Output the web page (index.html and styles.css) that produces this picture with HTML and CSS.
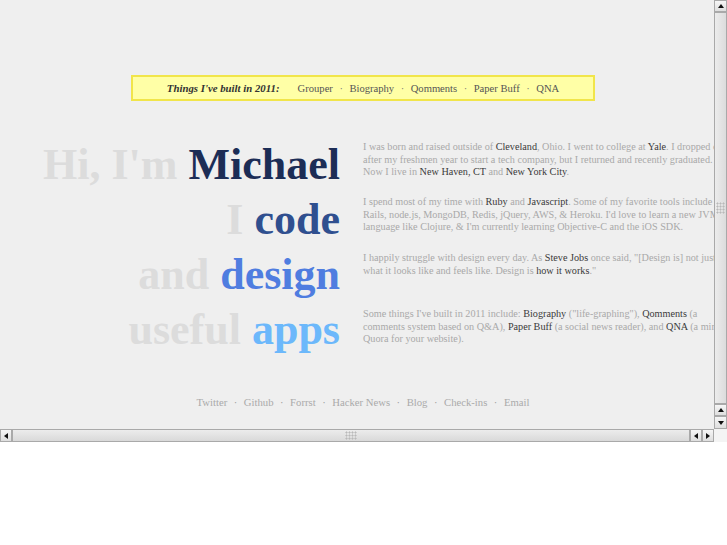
FILE: index.html
```html
<!DOCTYPE html>
<html>
<head>
    <link rel="stylesheet" href="styles.css">
</head>
<body>
    <div class="frame">
        <div class="viewport">
            <div class="page">
                <div class="built">
                    <span class="built-label">Things I've built in 2011:</span>
                    <a>Grouper</a><span class="dot">&middot;</span>
                    <a>Biography</a><span class="dot">&middot;</span>
                    <a>Qomments</a><span class="dot">&middot;</span>
                    <a>Paper Buff</a><span class="dot">&middot;</span>
                    <a>QNA</a>
                </div>

                <div class="intro">
                    <div class="line">Hi, I'm <span class="c1">Michael</span></div>
                    <p class="para">I was born and raised outside of <a>Cleveland</a>, Ohio. I went to college at <a>Yale</a>. I dropped out<br>
                    after my freshmen year to start a tech company, but I returned and recently graduated.<br>
                    Now I live in <a>New Haven, CT</a> and <a>New York City</a>.</p>

                    <div class="line">I <span class="c2">code</span></div>
                    <p class="para">I spend most of my time with <a>Ruby</a> and <a>Javascript</a>. Some of my favorite tools include<br>
                    Rails, node.js, MongoDB, Redis, jQuery, AWS, &amp; Heroku. I'd love to learn a new JVM<br>
                    language like Clojure, &amp; I'm currently learning Objective-C and the iOS SDK.</p>

                    <div class="line">and <span class="c3">design</span></div>
                    <p class="para p3">I happily struggle with design every day. As <a>Steve Jobs</a> once said, "[Design is] not just<br>
                    what it looks like and feels like. Design is <a>how it works</a>."</p>

                    <div class="line">useful <span class="c4">apps</span></div>
                    <p class="para p4">Some things I've built in 2011 include: <a>Biography</a> ("life-graphing"), <a>Qomments</a> (a<br>
                    comments system based on Q&amp;A), <a>Paper Buff</a> (a social news reader), and <a>QNA</a> (a mini<br>
                    Quora for your website).</p>
                </div>

                <div class="footer">
                    <a>Twitter</a><span class="dot">&middot;</span>
                    <a>Github</a><span class="dot">&middot;</span>
                    <a>Forrst</a><span class="dot">&middot;</span>
                    <a>Hacker News</a><span class="dot">&middot;</span>
                    <a>Blog</a><span class="dot">&middot;</span>
                    <a>Check-ins</a><span class="dot">&middot;</span>
                    <a>Email</a>
                </div>
            </div>
        </div>

        <div class="vscroll">
            <div class="btn up"></div>
            <div class="thumb"><div class="grip"></div></div>
            <div class="btn up"></div>
            <div class="btn down"></div>
        </div>
        <div class="hscroll">
            <div class="btn left"></div>
            <div class="thumb"><div class="grip"></div></div>
            <div class="btn left"></div>
            <div class="btn right"></div>
        </div>
        <div class="corner"></div>
    </div>
</body>
</html>
```

FILE: styles.css
```css
body{
    margin: 0;
    background-color: #fff;
    font-family: "Liberation Serif", "Times New Roman", serif;
}

/* frame with its scrollbars */
.frame{
    display: grid;
    grid-template-columns: 714px 13px;
    grid-template-rows: 429px 13px;
    width: 727px;
}
.viewport{
    overflow: hidden;
    background-color: #efefef;
}
.page{
    width: 726px;
    padding-top: 75px;
}

/* yellow bar */
.built{
    box-sizing: border-box;
    width: 464px;
    height: 26px;
    margin: 0 auto;
    display: flex;
    justify-content: center;
    align-items: center;
    background-color: #ffffa6;
    border: 2px solid #f1e54a;
    font-size: 10.6px;
    color: #555;
}
.built-label{
    font-size: 10.8px;
    font-weight: bold;
    font-style: italic;
    color: #333;
    margin-right: 18px;
}
.dot{
    margin: 0 6.5px;
    color: #999;
}
.built .dot{
    color: #777;
}

/* heading + paragraphs */
.intro{
    display: grid;
    grid-template-columns: 340px 380px;
    grid-auto-rows: 55px;
    column-gap: 23px;
    margin-top: 36px;
}
.line{
    text-align: right;
    white-space: nowrap;
    font-size: 44px;
    line-height: 55px;
    font-weight: bold;
    color: #dcdcdc;
}
.c1{ color: #1c2d56; }
.c2{ color: #2f4f8f; }
.c3{ color: #4f7de0; }
.c4{ color: #6cb8fb; }

.para{
    margin: 0;
    padding-top: 4px;
    white-space: nowrap;
    font-size: 10.2px;
    line-height: 12.5px;
    color: #a9a9a9;
}
.para.p3{
    padding-top: 5px;
}
.para.p4{
    padding-top: 6px;
}
.para a{
    color: #3a3a3a;
}

/* footer links */
.footer{
    margin-top: 38px;
    display: flex;
    justify-content: center;
    font-size: 10.7px;
    line-height: 14px;
    color: #aaa;
}

/* scrollbars, drawn */
.vscroll{
    display: flex;
    flex-direction: column;
}
.hscroll{
    display: flex;
}
.corner{
    background-color: #f4f4f4;
}
.btn{
    box-sizing: border-box;
    flex: 0 0 12px;
    width: 12px;
    height: 12px;
    display: flex;
    align-items: center;
    justify-content: center;
    background: linear-gradient(#f6f6f6, #dedede);
    border: 1px solid #a9a9a9;
}
.vscroll .btn{
    width: 13px;
}
.vscroll .btn.down{
    flex-basis: 13px;
    height: 13px;
}
.hscroll .btn{
    height: 13px;
}
.btn::before{
    content: "";
    width: 0;
    height: 0;
    border: 3px solid transparent;
}
.up::before{ border-bottom: 4px solid #111; border-top-width: 0; }
.down::before{ border-top: 4px solid #111; border-bottom-width: 0; }
.left::before{ border-right: 4px solid #111; border-left-width: 0; }
.right::before{ border-left: 4px solid #111; border-right-width: 0; }

.thumb{
    box-sizing: border-box;
    flex: 1;
    display: flex;
    align-items: center;
    justify-content: center;
    border: 1px solid #a9a9a9;
}
.vscroll .thumb{
    background: linear-gradient(to right, #ececec, #dcdcdc);
}
.hscroll .thumb{
    background: linear-gradient(#ececec, #d9d9d9);
}
.grip{
    background-image: radial-gradient(#b9b9b9 45%, transparent 50%);
    background-size: 3px 3px;
}
.vscroll .grip{
    width: 9px;
    height: 12px;
}
.hscroll .grip{
    width: 12px;
    height: 9px;
}
```
